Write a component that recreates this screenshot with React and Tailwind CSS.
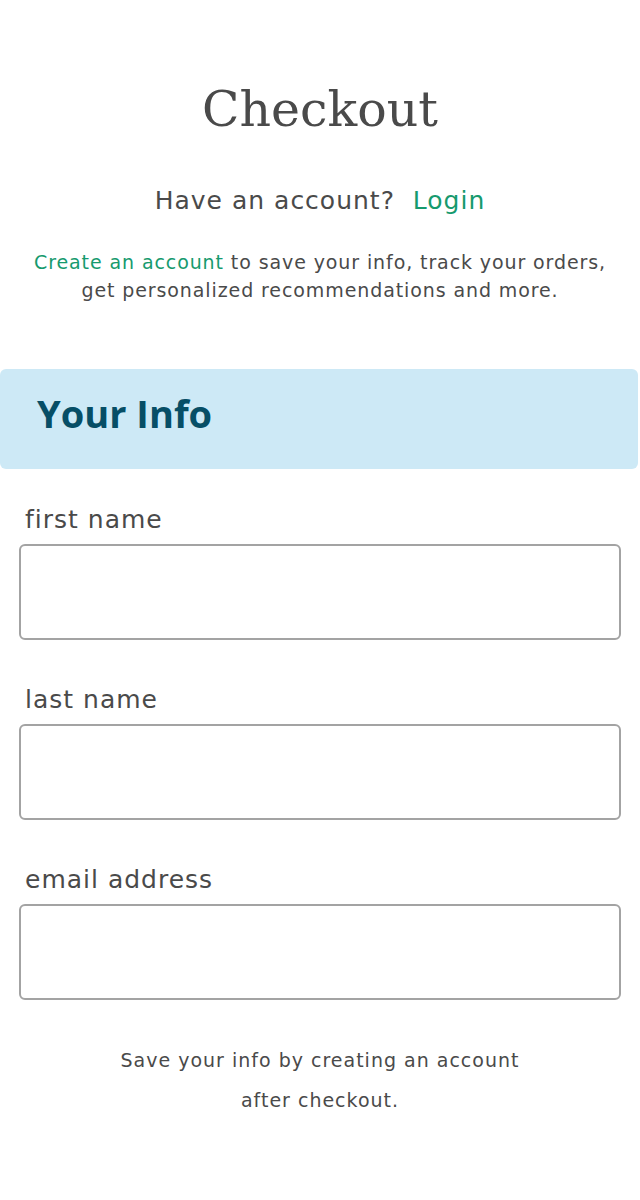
import React from 'react';

const Field = ({ label }) => (
    <div className="flex flex-col">
        <label className="pl-[25px] text-[25px] leading-[36px] tracking-[1px] text-[#4a4a4a]">{label}</label>
        <input
            type="text"
            className="mx-[19px] mt-[6px] h-[96px] rounded-[6px] border-2 border-[#a3a3a3] bg-white outline-none"
        />
    </div>
);

export default function App() {
    return (
        <div className="min-h-[1200px] bg-white" style={{ fontFamily: "'DejaVu Sans', 'Open Sans', sans-serif" }}>
            {/* ── Header ── */}
            <div className="flex flex-col items-center pt-[76px] text-center">
                <h1
                    className="text-[49px] leading-[68px] font-normal text-[#4a4a4a]"
                    style={{ fontFamily: "'DejaVu Serif', serif" }}
                >
                    Checkout
                </h1>
                <p className="mt-[39px] text-[25px] leading-[36px] tracking-[1px] text-[#4a4a4a]">
                    Have an account?&nbsp; <a className="text-[#169a6e]" href="#">Login</a>
                </p>
                <p className="mt-[29px] px-[10px] text-[19px] leading-[28px] tracking-[0.9px] text-[#4a4a4a]">
                    <a className="text-[#169a6e]" href="#">Create an account</a> to save your info, track your orders,
                    <br />
                    get personalized recommendations and more.
                </p>
            </div>

            {/* ── Your Info banner ── */}
            <div className="mt-[65px] mr-[2px] flex h-[100px] items-center rounded-[6px] bg-[#cde9f6] pb-[12px] pl-[37px]">
                <h2
                    className="text-[38px] font-bold text-[#064e66]"
                    style={{ fontFamily: "'Open Sans', sans-serif" }}
                >
                    Your Info
                </h2>
            </div>

            {/* ── Form ── */}
            <form className="mt-[33px] flex flex-col gap-[42px]">
                <Field label="first name" />
                <Field label="last name" />
                <Field label="email address" />
            </form>

            <p className="mt-[40px] text-center text-[19px] leading-[40px] tracking-[1px] text-[#4a4a4a]">
                Save your info by creating an account
                <br />
                after checkout.
            </p>
        </div>
    );
}
